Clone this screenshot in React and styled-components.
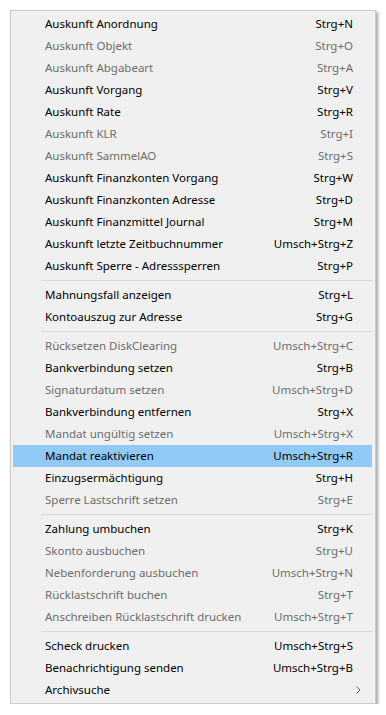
import React from "react";
import styled, { createGlobalStyle } from "styled-components";

const GlobalStyle = createGlobalStyle`
    body {
        margin: 0;
        background: #ffffff;
        font-family: "Segoe UI", "Noto Sans", sans-serif;
    }
`;

const items = [
    { label: "Auskunft Anordnung", key: "Strg+N" },
    { label: "Auskunft Objekt", key: "Strg+O", disabled: true },
    { label: "Auskunft Abgabeart", key: "Strg+A", disabled: true },
    { label: "Auskunft Vorgang", key: "Strg+V" },
    { label: "Auskunft Rate", key: "Strg+R" },
    { label: "Auskunft KLR", key: "Strg+I", disabled: true },
    { label: "Auskunft SammelAO", key: "Strg+S", disabled: true },
    { label: "Auskunft Finanzkonten Vorgang", key: "Strg+W" },
    { label: "Auskunft Finanzkonten Adresse", key: "Strg+D" },
    { label: "Auskunft Finanzmittel Journal", key: "Strg+M" },
    { label: "Auskunft letzte Zeitbuchnummer", key: "Umsch+Strg+Z" },
    { label: "Auskunft Sperre - Adresssperren", key: "Strg+P" },
    { separator: true },
    { label: "Mahnungsfall anzeigen", key: "Strg+L" },
    { label: "Kontoauszug zur Adresse", key: "Strg+G" },
    { separator: true },
    { label: "Rücksetzen DiskClearing", key: "Umsch+Strg+C", disabled: true },
    { label: "Bankverbindung setzen", key: "Strg+B" },
    { label: "Signaturdatum setzen", key: "Umsch+Strg+D", disabled: true },
    { label: "Bankverbindung entfernen", key: "Strg+X" },
    { label: "Mandat ungültig setzen", key: "Umsch+Strg+X", disabled: true },
    { label: "Mandat reaktivieren", key: "Umsch+Strg+R", active: true },
    { label: "Einzugsermächtigung", key: "Strg+H" },
    { label: "Sperre Lastschrift setzen", key: "Strg+E", disabled: true },
    { separator: true },
    { label: "Zahlung umbuchen", key: "Strg+K" },
    { label: "Skonto ausbuchen", key: "Strg+U", disabled: true },
    { label: "Nebenforderung ausbuchen", key: "Umsch+Strg+N", disabled: true },
    { label: "Rücklastschrift buchen", key: "Strg+T", disabled: true },
    { label: "Anschreiben Rücklastschrift drucken", key: "Umsch+Strg+T", disabled: true },
    { separator: true },
    { label: "Scheck drucken", key: "Umsch+Strg+S" },
    { label: "Benachrichtigung senden", key: "Umsch+Strg+B" },
    { label: "Archivsuche", submenu: true },
];

const ContextMenu = () => {
    return (
        <Menu>
            {items.map((item, i) =>
                item.separator ? (
                    <Separator key={i} />
                ) : (
                    <Item key={i} $disabled={item.disabled} $active={item.active}>
                        <Label>{item.label}</Label>
                        {item.key && <Shortcut>{item.key}</Shortcut>}
                        {item.submenu && (
                            <Arrow viewBox="0 0 5 8" width="5" height="8">
                                <path d="M0.5 0.5 L4 4 L0.5 7.5" fill="none" stroke="#5a5a5a" strokeWidth="1" />
                            </Arrow>
                        )}
                    </Item>
                )
            )}
        </Menu>
    );
};

const App = () => (
    <>
        <GlobalStyle />
        <ContextMenu />
    </>
);

const Menu = styled.div`
    box-sizing: border-box;
    width: 366px;
    margin: 10px 0 0 10px;
    padding: 2px;
    background: #f0f0f0;
    border: 1px solid #cccccc;
    box-shadow: 2px 2px 3px rgba(0, 0, 0, 0.35);
    display: flex;
    flex-direction: column;
`;

const Item = styled.div`
    height: 22px;
    display: flex;
    align-items: center;
    padding: 0 19px 1px 32px;
    box-sizing: border-box;
    margin-right: 1px;
    font-size: 11.5px;
    color: ${(p) => (p.$disabled ? "#6d6d6d" : "#000000")};
    background: ${(p) => (p.$active ? "#91c9f7" : "transparent")};
`;

const Label = styled.span`
    flex: 1;
    white-space: nowrap;
`;

const Shortcut = styled.span`
    white-space: nowrap;
`;

const Arrow = styled.svg`
    margin-right: -8px;
`;

const Separator = styled.div`
    height: 1px;
    margin: 3px 1px 3px 28px;
    background: #d7d7d7;
`;

export default App;
